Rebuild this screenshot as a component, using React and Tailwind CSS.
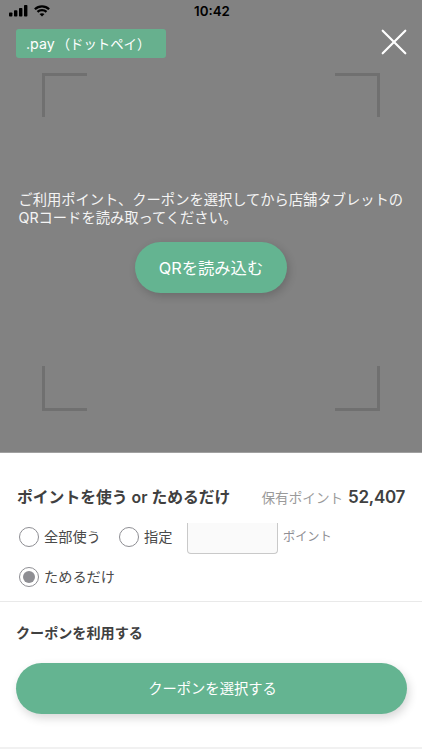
import { useState } from 'react'
import clsx from 'clsx'

const POINT_BALANCE = 52407

function SignalIcon() {
    return (
        <svg width="19" height="12" viewBox="0 0 19 12" fill="#000">
            <rect x="0" y="7.5" width="3.4" height="4" rx="0.8" />
            <rect x="5" y="5.3" width="3.4" height="6.2" rx="0.8" />
            <rect x="10" y="3" width="3.4" height="8.5" rx="0.8" />
            <rect x="15" y="0" width="3.4" height="11.5" rx="0.8" />
        </svg>
    )
}

function WifiIcon() {
    return (
        <svg width="16" height="12" viewBox="0 0 16 12" fill="none" stroke="#000" strokeWidth="2.3">
            <path d="M0.9 4.2 C4.8 0.3 11.2 0.3 15.1 4.2" />
            <path d="M3.5 6.9 C6 4.5 10 4.5 12.5 6.9" />
            <path d="M8 11.6 L5.5 9.1 C6.9 7.8 9.1 7.8 10.5 9.1 Z" fill="#000" stroke="none" />
        </svg>
    )
}

function CloseIcon() {
    return (
        <svg width="26" height="26" viewBox="0 0 26 26" stroke="#fff" strokeWidth="2.2" strokeLinecap="round">
            <path d="M1.7 1.7 L24.3 24.3 M24.3 1.7 L1.7 24.3" />
        </svg>
    )
}

function Radio({ label, checked, onSelect, className }) {
    return (
        <button type="button" role="radio" aria-checked={checked} onClick={onSelect} className={clsx('flex items-center', className)}>
            <span className="flex size-5 items-center justify-center rounded-full border border-[#8e8e93] bg-white">
                {checked && <span className="size-3 rounded-full bg-[#8e8e93]" />}
            </span>
            <span className="ml-[5px] text-[14.2px] leading-5 text-[#4a4a4a]">{label}</span>
        </button>
    )
}

export default function App() {
    const [mode, setMode] = useState('save')
    const [amount, setAmount] = useState('')

    return (
        <div className="flex h-[750px] w-[422px] flex-col overflow-hidden bg-white font-['Inter','Noto_Sans_CJK_JP',sans-serif]">
            {/* Camera view */}
            <section className="flex h-[453px] shrink-0 flex-col border-b border-[#a0a0a0] bg-[#828282]">
                <div className="grid h-[21px] grid-cols-3 items-center px-[9px]">
                    <div className="flex items-center gap-[6px]">
                        <SignalIcon />
                        <WifiIcon />
                    </div>
                    <span className="pl-[2px] text-center text-[13.3px] leading-5 font-semibold text-black">10:42</span>
                </div>

                <header className="mt-2 flex h-[29px] justify-between pr-[15px] pl-4">
                    <h1 className="h-[29px] w-[150px] rounded-[3px] bg-[#67b08e] pl-[10px] text-[14.2px] leading-[29px] whitespace-nowrap text-white">
                        .pay<span className="ml-[2px] text-[13.4px]">（ドットペイ）</span>
                    </h1>
                    <button type="button" aria-label="閉じる" className="h-[26px] w-[26px]">
                        <CloseIcon />
                    </button>
                </header>

                <div className="mt-[15px] flex justify-between pr-[42px] pl-[42px]">
                    <span className="h-11 w-[45px] border-t-3 border-l-3 border-[#707070]" />
                    <span className="h-11 w-[45px] border-t-3 border-r-3 border-[#707070]" />
                </div>

                <p className="mt-[74px] pl-[18.5px] text-[14.27px] leading-[18px] whitespace-nowrap text-[#f4f4f4]">
                    ご利用ポイント、クーポンを選択してから店舗タブレットの
                    <br />
                    QRコードを読み取ってください。
                </p>

                <button type="button" className="mx-auto mt-[15px] h-[51px] w-[152px] rounded-full bg-[#64b491] pt-[2px] text-[16.3px] text-white shadow-[2px_3px_8px_rgba(0,0,0,0.18)]">
                    QRを読み込む
                </button>

                <div className="mt-[73px] flex justify-between pr-[42px] pl-[42px]">
                    <span className="h-[45px] w-[45px] border-b-3 border-l-3 border-[#707070]" />
                    <span className="h-[45px] w-[45px] border-r-3 border-b-3 border-[#707070]" />
                </div>
            </section>

            {/* Points */}
            <section className="h-[149px] shrink-0 border-b border-[#e9e9e9]">
                <div className="flex h-[70px] items-end justify-between pr-[17px] pb-[11px] pl-[17px]">
                    <h2 className="text-[15.8px] leading-7 font-semibold whitespace-nowrap text-[#404040]">ポイントを使う or ためるだけ</h2>
                    <p className="flex items-baseline text-[13.6px] leading-7 whitespace-nowrap text-[#9a9a9a]">
                        保有ポイント
                        <span className="ml-[5px] text-[17px] font-semibold tracking-[-0.3px] text-[#404040]">{POINT_BALANCE.toLocaleString('en-US')}</span>
                    </p>
                </div>

                <div role="radiogroup">
                    <div className="flex h-[31px] items-start pl-[19px]">
                        <Radio label="全部使う" checked={mode === 'all'} onSelect={() => setMode('all')} className="mt-1 w-[100px]" />
                        <Radio label="指定" checked={mode === 'part'} onSelect={() => setMode('part')} className="mt-1 w-[68px]" />
                        <input
                            aria-label="ポイント"
                            value={amount}
                            onChange={e => setAmount(e.target.value)}
                            className="h-[31px] w-[91px] rounded-b-[4px] border border-t-0 border-[#c9c9c9] bg-[#fafafa] px-2 text-sm outline-none"
                        />
                        <span className="mt-1 ml-[5px] text-[12.2px] leading-5 text-[#8e8e93]">ポイント</span>
                    </div>
                    <div className="mt-[13px] flex pl-[19px]">
                        <Radio label="ためるだけ" checked={mode === 'save'} onSelect={() => setMode('save')} />
                    </div>
                </div>
            </section>

            {/* Coupons */}
            <section className="h-[147px] shrink-0 border-b-2 border-[#f1f1f1] px-4">
                <h2 className="pt-[21px] text-[14.1px] leading-5 font-semibold text-[#404040]">クーポンを利用する</h2>
                <button type="button" className="mt-5 h-[51px] w-[391px] rounded-full bg-[#64b491] pl-[2px] text-[14.3px] text-white shadow-[2px_4px_10px_rgba(0,0,0,0.16)]">
                    クーポンを選択する
                </button>
            </section>
        </div>
    )
}
